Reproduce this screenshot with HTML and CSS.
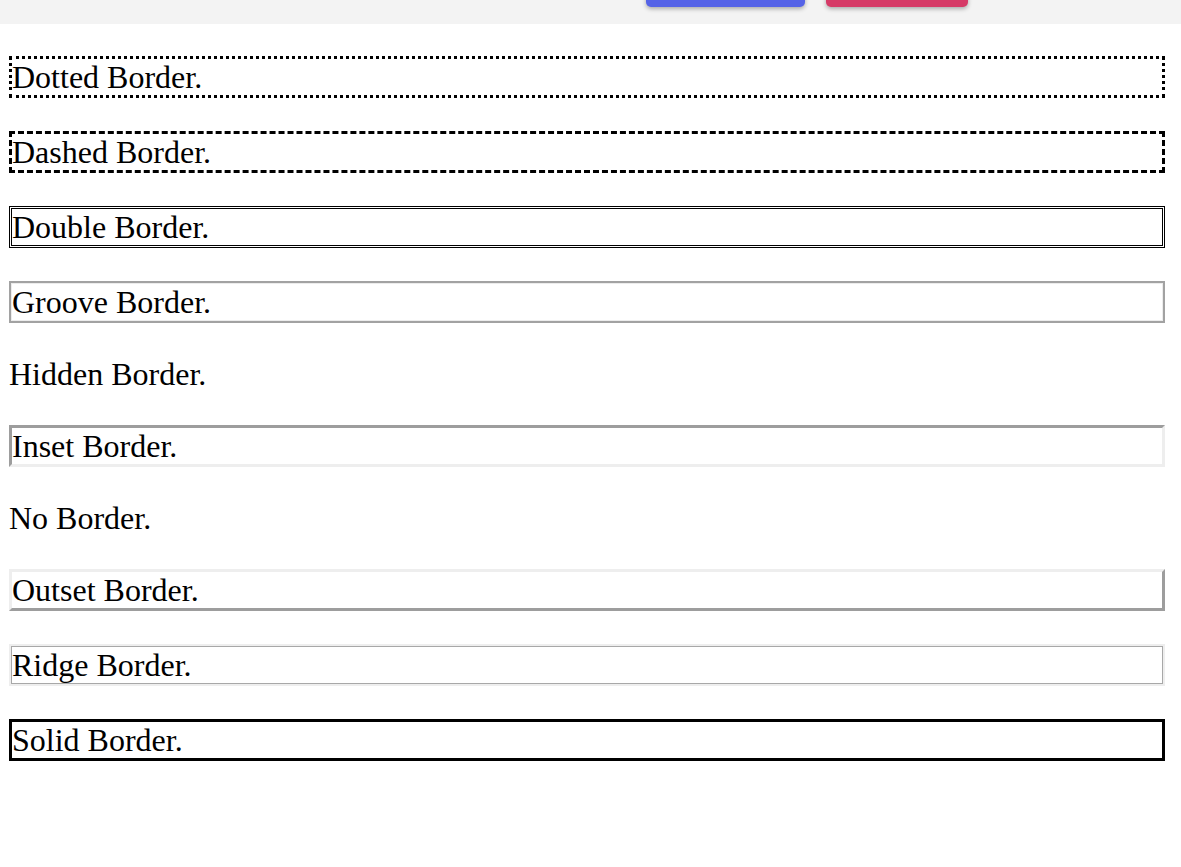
FILE: index.html
```html
<!DOCTYPE html>
<html>
<head>
<meta charset="utf-8">
<link rel="stylesheet" href="styles.css">
</head>
<body>
<div class="topbar">
  <button class="btn btn-blue" type="button"></button>
  <button class="btn btn-red" type="button"></button>
</div>
<div class="content">
  <p class="box dotted">Dotted Border.</p>
  <p class="box dashed">Dashed Border.</p>
  <p class="box double">Double Border.</p>
  <p class="box groove">Groove Border.</p>
  <p class="box hidden">Hidden Border.</p>
  <p class="box inset">Inset Border.</p>
  <p class="box none">No Border.</p>
  <p class="box outset">Outset Border.</p>
  <p class="box ridge">Ridge Border.</p>
  <p class="box solid">Solid Border.</p>
</div>
</body>
</html>
```
FILE: styles.css
```css
html, body {
  margin: 0;
  padding: 0;
  background: #ffffff;
}
body {
  font-family: "Liberation Serif", "Times New Roman", serif;
  color: #000;
}
.topbar {
  height: 24px;
  background: #f3f3f3;
  display: flex;
  align-items: flex-end;
  gap: 21px;
  padding-left: 646px;
  overflow: hidden;
}
.btn {
  border: none;
  margin: 0 0 17px 0;
  padding: 0;
  height: 40px;
  flex: none;
  border-radius: 5px;
  box-shadow: 0 2px 4px rgba(0, 0, 0, 0.3);
}
.btn-blue {
  width: 159px;
  background: #5563e7;
}
.btn-red {
  width: 142px;
  background: #d63a67;
}
.content {
  display: flex;
  flex-direction: column;
  gap: 33px;
  padding: 32px 16px 0 9px;
}
.box {
  margin: 0;
  padding: 0;
  font-size: 32px;
  line-height: 36px;
  border: 3px solid #000;
}
.dotted { border-style: dotted; }
.dashed { border-style: dashed; }
.double { border-style: double; }
.groove {
  border: 2px solid #a2a2a2;
  padding: 1px;
  box-shadow: inset 0 0 0 1px #ececec;
}
.hidden { border-style: hidden; }
.inset {
  border-style: solid;
  border-color: #9d9d9d #eeeeee #eeeeee #9d9d9d;
}
.none { border-style: none; }
.outset {
  border-style: solid;
  border-color: #eeeeee #9d9d9d #9d9d9d #eeeeee;
}
.ridge {
  border: 2px solid #eeeeee;
  padding: 1px;
  box-shadow: inset 0 0 0 1px #a8a8a8;
}
.solid { border-style: solid; }
```
